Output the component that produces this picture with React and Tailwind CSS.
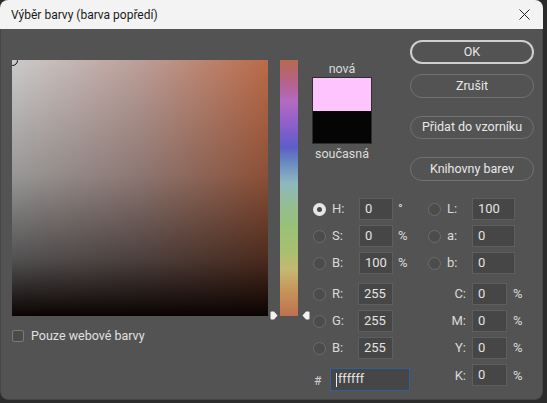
import React from 'react';

const font = { fontFamily: 'Roboto, "Noto Sans", sans-serif' };

// radio button, light ring when selected
function Radio({ on }) {
  if (on) {
    return (
      <span className="flex h-[13px] w-[13px] items-center justify-center rounded-full bg-[#e6e6e6]">
        <span className="block h-[5px] w-[5px] rounded-full bg-[#4a4a4a]" />
      </span>
    );
  }
  return <span className="block h-[13px] w-[13px] rounded-full border border-[#6c6c6c] bg-[#4c4c4c]" />;
}

function Field({ value, w }) {
  return (
    <div className={`flex h-[22px] items-center border border-[#5e5e5e] bg-[#464646] pl-[5px] text-[13px] text-[#e2e2e2] ${w}`}>
      {value}
    </div>
  );
}

function Btn({ children, primary, h = 'h-[24px]', mt = '' }) {
  return (
    <div
      className={`flex ${h} ${mt} items-center justify-center rounded-full text-[12.5px] text-[#e8e8e8] ${
        primary ? 'border-2 border-[#cfcfcf]' : 'border border-[#717171]'
      }`}
    >
      {children}
    </div>
  );
}

function Pointer({ flip }) {
  return (
    <svg width="8" height="9" viewBox="0 0 8 9" className={flip ? 'mb-[-4px] -scale-x-100' : 'mb-[-4px]'}>
      <path d="M1.5 0.5 H4 L7.5 4.5 L4 8.5 H1.5 Q0.5 8.5 0.5 7.5 V1.5 Q0.5 0.5 1.5 0.5 Z" fill="#f2f2f2" />
    </svg>
  );
}

// HSB / Lab row
function TopRow({ l, lv, unit, on, r, rv }) {
  return (
    <div className="flex h-[22px] items-center">
      <div className="w-[20px] pl-[1px]"><Radio on={on} /></div>
      <div className="w-[27px] text-[13px] text-[#dadada]">{l}</div>
      <Field value={lv} w="w-[34px]" />
      <div className="w-[35px] pl-[5px] text-[13px] text-[#dadada]">{unit}</div>
      <div className="w-[19px]"><Radio /></div>
      <div className="w-[25px] text-[13px] text-[#dadada]">{r}</div>
      <Field value={rv} w="w-[43px]" />
    </div>
  );
}

function RgbRow({ l, v, c }) {
  return (
    <div className="flex h-[22px] items-center">
      <div className="w-[20px] pl-[1px]"><Radio /></div>
      <div className="w-[26px] text-[13px] text-[#dadada]">{l}</div>
      <Field value={v} w="w-[35px]" />
      <div className="w-[79px] pr-[6px] text-right text-[13px] text-[#dadada]">{c}</div>
      <Field value="0" w="w-[35px]" />
      <div className="pl-[6px] text-[13px] text-[#dadada]">%</div>
    </div>
  );
}

export default function App() {
  return (
    <div className="h-[403px] w-[547px] bg-[#2b2b2b]" style={font}>
      <div className="flex h-[400px] w-[543px] flex-col overflow-hidden rounded-[8px]">
        {/* title bar */}
        <div className="flex h-[29px] items-center justify-between bg-[#f3f3f3] pl-[11px] pr-[13px]">
          <span className="text-[12px] text-[#1a1a1a]">Výběr barvy (barva popředí)</span>
          <svg width="11" height="11" viewBox="0 0 11 11">
            <path d="M0.5 0.5 L10.5 10.5 M10.5 0.5 L0.5 10.5" stroke="#222" strokeWidth="1" />
          </svg>
        </div>

        <div className="flex flex-1 rounded-b-[8px] border-x border-b border-[#464646] bg-[#535353] pl-[11px] pt-[11px]">
          {/* colour field */}
          <div className="mt-[20px] flex flex-col">
            <div className="relative h-[256px] w-[256px] overflow-hidden bg-[linear-gradient(to_bottom,transparent_0%,rgba(0,0,0,0.25)_45%,rgba(0,0,0,0.6)_78%,#0a0302_100%),linear-gradient(to_right,#cbcaca,#bc9e98_50%,#bb6a48)]">
              <span className="absolute left-[-5px] top-[-5px] h-[11px] w-[11px] rounded-full border-[1.5px] border-[#111]" />
            </div>
            <div className="mt-[11px] flex items-center">
              <span className="h-[12px] w-[12px] rounded-[2px] border border-[#7a7a7a] bg-[#4b4b4b]" />
              <span className="ml-[7px] text-[12.5px] text-[#e0e0e0]">Pouze webové barvy</span>
            </div>
          </div>

          {/* hue slider */}
          <div className="ml-[2px] mt-[20px] flex h-[256px] items-end">
            <Pointer />
            <div className="ml-[2px] h-[256px] w-[18px] bg-[linear-gradient(to_bottom,#b86a50_0%,#b5628c_9%,#b46ac0_16%,#8a5ecb_26%,#5d5ec8_34%,#6889c0_40%,#8db8c0_48%,#93bc9a_55%,#97c07a_64%,#a6c070_74%,#c4b870_82%,#c6955a_90%,#c0704e_100%)]" />
            <div className="ml-[4px]"><Pointer flip /></div>
          </div>

          {/* right column */}
          <div className="ml-[2px] flex w-[222px] flex-col">
            <div className="flex h-[141px]">
              <div className="mt-[22px] flex w-[60px] flex-col items-center">
                <span className="h-[14px] text-[12.5px] leading-[14px] text-[#dcdcdc]">nová</span>
                <div className="mt-[1px] flex h-[67px] w-[60px] flex-col border border-[#2e2e2e]">
                  <div className="h-[33px] bg-[#fdc4fd]" />
                  <div className="flex-1 bg-[#050505]" />
                </div>
                <span className="mt-[3px] text-[12.5px] leading-[14px] text-[#dcdcdc]">současná</span>
              </div>
              <div className="ml-auto flex w-[124px] flex-col">
                <Btn primary>OK</Btn>
                <Btn mt="mt-[10px]">Zrušit</Btn>
                <Btn mt="mt-[18px]" h="h-[23px]">Přidat do vzorníku</Btn>
                <Btn mt="mt-[18px]">Knihovny barev</Btn>
              </div>
            </div>

            <div className="mt-[17px] flex flex-col gap-[5px]">
              <TopRow on l="H:" lv="0" unit="°" r="L:" rv="100" />
              <TopRow l="S:" lv="0" unit="%" r="a:" rv="0" />
              <TopRow l="B:" lv="100" unit="%" r="b:" rv="0" />
            </div>

            <div className="mt-[9px] flex flex-col gap-[5px]">
              <RgbRow l="R:" v="255" c="C:" />
              <RgbRow l="G:" v="255" c="M:" />
              <RgbRow l="B:" v="255" c="Y:" />
              <div className="flex h-[22px] items-start">
                <div className="mt-[8px] w-[18px] pl-[2px] text-[12px] text-[#cfcfcf]">#</div>
                <div className="mt-[4px] flex h-[23px] w-[80px] items-center border border-[#2f6099] bg-[#464646] pl-[5px] text-[12.5px] text-[#e4e4e4]">
                  <span className="mr-[1px] h-[14px] w-px bg-[#f0f0f0]" />
                  ffffff
                </div>
                <div className="w-[62px] pr-[6px] pt-[2px] text-right text-[13px] text-[#dadada]">K:</div>
                <Field value="0" w="w-[35px]" />
                <div className="pl-[6px] pt-[2px] text-[13px] text-[#dadada]">%</div>
              </div>
            </div>
          </div>
        </div>
      </div>
    </div>
  );
}
